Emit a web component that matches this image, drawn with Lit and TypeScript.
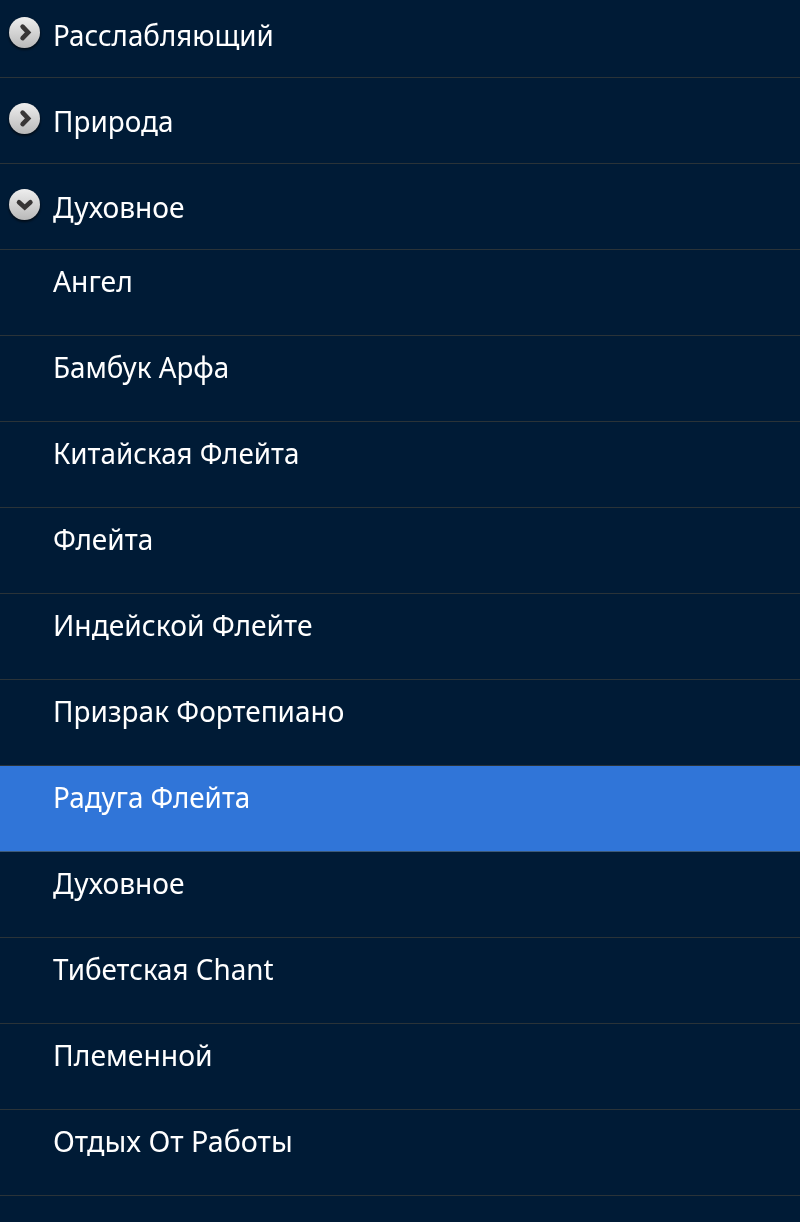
import { LitElement, html, css } from "lit";
import { customElement } from "lit/decorators.js";

interface Row { label: string; stretch: number; kind: "group" | "child"; open?: boolean; selected?: boolean }

const rows: Row[] = [
  { label: "Расслабляющий", stretch: 0.957, kind: "group" },
  { label: "Природа", stretch: 0.962, kind: "group" },
  { label: "Духовное", stretch: 0.97, kind: "group", open: true },
  { label: "Ангел", stretch: 0.976, kind: "child" },
  { label: "Бамбук Арфа", stretch: 0.958, kind: "child" },
  { label: "Китайская Флейта", stretch: 0.958, kind: "child" },
  { label: "Флейта", stretch: 0.965, kind: "child" },
  { label: "Индейской Флейте", stretch: 0.973, kind: "child" },
  { label: "Призрак Фортепиано", stretch: 0.965, kind: "child" },
  { label: "Радуга Флейта", stretch: 0.96, kind: "child", selected: true },
  { label: "Духовное", stretch: 0.97, kind: "child" },
  { label: "Тибетская Chant", stretch: 0.959, kind: "child" },
  { label: "Племенной", stretch: 0.977, kind: "child" },
  { label: "Отдых От Работы", stretch: 0.99, kind: "child" },
];

@customElement("app-root")
export class AppRoot extends LitElement {
  static styles = css`
    :host { display: block; height: 1222px; overflow: hidden; background: #001b36; color: #fff; font: 29px/38px "Noto Sans", "Open Sans", sans-serif; }
    .row { box-sizing: border-box; height: 86px; border-bottom: 1px solid #2a3338; display: flex; align-items: flex-start; }
    .group:first-child { height: 78px; }
    .icon { width: 53px; flex: none; }
    .icon svg { display: block; margin: 21px 0 0 5px; }
    .group:first-child .icon svg { margin-top: 13px; }
    .label { white-space: nowrap; transform-origin: 0 0; }
    .group .label { padding-top: 24px; }
    .group:first-child .label { padding-top: 16px; }
    .child .label { padding-top: 12px; }
    .selected { background: #3075d8; border-bottom-color: #3d5a78; }
  `;

  indicator(open: boolean) {
    return html`<svg width="40" height="40" viewBox="0 0 40 40">
      <defs>
        <linearGradient id="g" x1="0" y1="0" x2="0" y2="1"><stop offset="0" stop-color="#eeeeee"/><stop offset="1" stop-color="#b9b9b9"/></linearGradient>
        <filter id="s" x="-20%" y="-20%" width="140%" height="140%"><feGaussianBlur stdDeviation="1"/></filter>
      </defs>
      <circle cx="19.5" cy="21" r="15.8" fill="#000" opacity=".6" filter="url(#s)"/>
      <circle cx="19.5" cy="19.5" r="15.5" fill="url(#g)"/>
      <path d=${open ? "M14 17.2l5.7 5.200 5.700-5.200" : "M17.600 13.700l5.500 5.700-5.500 5.700"} fill="none" stroke="#383636" stroke-width="4.6" stroke-linecap="round" stroke-linejoin="miter"/>
    </svg>`;
  }

  render() {
    return html`${rows.map((r) => html`<div class="row ${r.kind} ${r.selected ? "selected" : ""}"><div class="icon">${r.kind === "group" ? this.indicator(!!r.open) : ""}</div><span class="label" style="transform: scaleX(${r.stretch})">${r.label}</span></div>`)}`;
  }
}
